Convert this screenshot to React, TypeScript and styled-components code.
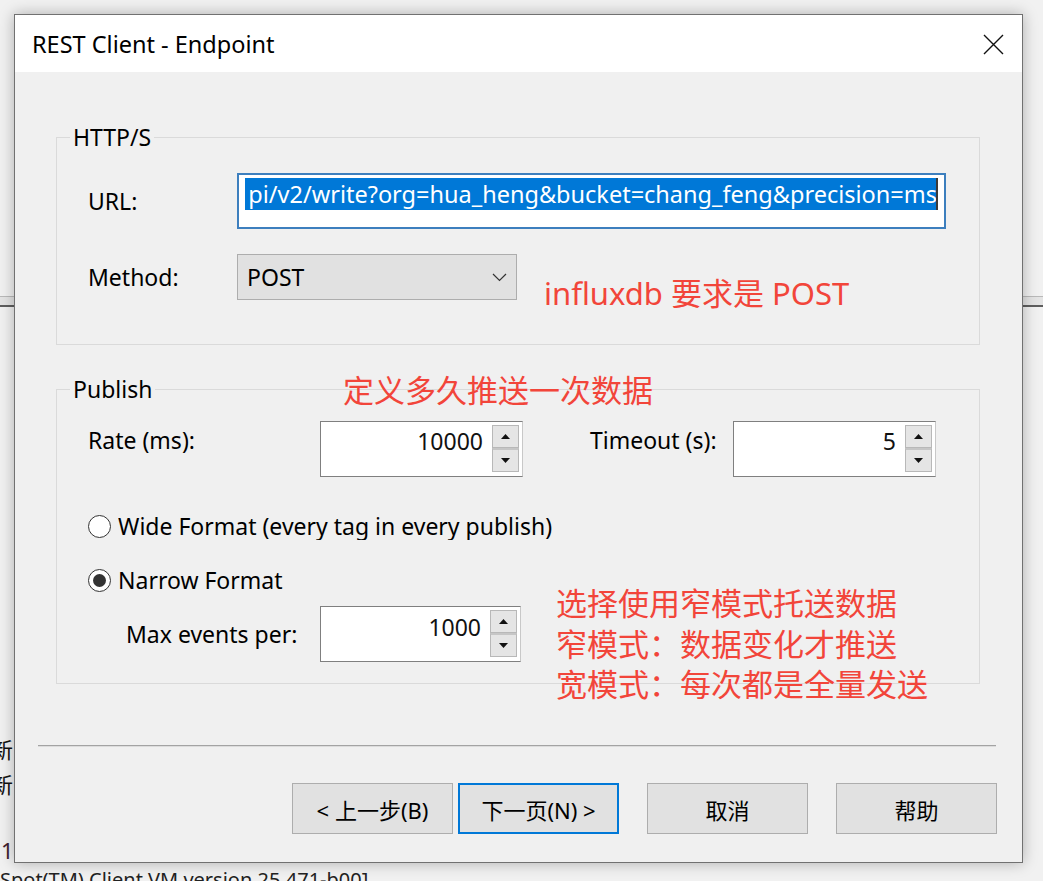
import React from 'react';
import styled, { createGlobalStyle } from 'styled-components';

const GlobalStyle = createGlobalStyle`
  html, body {
    margin: 0;
    padding: 0;
    background: #f1f1f1;
  }
  body {
    font-family: "Noto Sans", "Noto Sans CJK SC", sans-serif;
    color: #000;
  }
  * {
    box-sizing: border-box;
  }
`;

const App: React.FC = () => {
  return (
    <Desktop>
      <GlobalStyle />
      <BackdropRule />
      <BackdropGlyph $top={733}>新</BackdropGlyph>
      <BackdropGlyph $top={768}>新</BackdropGlyph>
      <BackdropDigit>1</BackdropDigit>
      <BackdropLog>Spot(TM) Client VM version 25.471-b00]</BackdropLog>

      <Window>
        <TitleBar>
          <Title>REST Client - Endpoint</Title>
          <CloseButton aria-label="close">
            <svg width="21" height="21" viewBox="0 0 21 21">
              <path d="M1 1 L20 20 M20 1 L1 20" stroke="#111" strokeWidth="1.4" fill="none" />
            </svg>
          </CloseButton>
        </TitleBar>

        <Body>
          <Content>
            <Group>
              <Legend>HTTP/S</Legend>
              <GroupBody $top={22}>
                <Row>
                  <FieldLabel $width={149}>URL:</FieldLabel>
                  <UrlInput>
                    <Selection>pi/v2/write?org=hua_heng&amp;bucket=chang_feng&amp;precision=ms</Selection>
                  </UrlInput>
                </Row>
                <Row $mt={25}>
                  <FieldLabel $width={149}>Method:</FieldLabel>
                  <Select>
                    <span>POST</span>
                    <svg width="15" height="9" viewBox="0 0 15 9">
                      <path d="M1 1 L7.5 7.5 L14 1" stroke="#333" strokeWidth="1.2" fill="none" />
                    </svg>
                  </Select>
                </Row>
              </GroupBody>
            </Group>

            <Group $mt={30} $pb={21}>
              <Legend>Publish</Legend>
              <GroupBody $top={18}>
                <Row $align="flex-start">
                  <FieldLabel $width={232} $mt={5}>Rate (ms):</FieldLabel>
                  <Spinner value="10000" />
                  <FieldLabel $width={143} $mt={5} $ml={67}>Timeout (s):</FieldLabel>
                  <Spinner value="5" />
                </Row>
                <Row $mt={35}>
                  <Radio />
                  <RadioText $clip={440}>Wide Format (every tag in every publish)</RadioText>
                </Row>
                <Row $mt={26}>
                  <Radio checked />
                  <RadioText>Narrow Format</RadioText>
                </Row>
                <Row $mt={12}>
                  <FieldLabel $width={194} $ml={38}>Max events per:</FieldLabel>
                  <Spinner value="1000" $width={201} $lift />
                </Row>
              </GroupBody>
            </Group>
          </Content>

          <Separator />

          <ButtonBar>
            <NavPair>
              <DialogButton>&lt; 上一步(B)</DialogButton>
              <DialogButton $primary>下一页(N) &gt;</DialogButton>
            </NavPair>
            <DialogButton>取消</DialogButton>
            <DialogButton>帮助</DialogButton>
          </ButtonBar>
        </Body>
      </Window>

      <Note $left={544} $top={273}>influxdb 要求是 POST</Note>
      <Note $left={343} $top={370}>定义多久推送一次数据</Note>
      <Note $left={556} $top={583}>
        选择使用窄模式托送数据
        <br />
        窄模式：数据变化才推送
        <br />
        宽模式：每次都是全量发送
      </Note>
    </Desktop>
  );
};

export default App;

interface SpinnerProps {
  value: string;
  $width?: number;
  $lift?: boolean;
}

const Spinner: React.FC<SpinnerProps> = ({ value, $width, $lift }) => (
  <SpinBox $width={$width}>
    <SpinValue $lift={$lift}>{value}</SpinValue>
    <SpinButtons>
      <SpinButton>
        <svg width="9" height="5" viewBox="0 0 9 5">
          <path d="M0 5 L4.5 0 L9 5 Z" fill="#111" />
        </svg>
      </SpinButton>
      <SpinButton>
        <svg width="9" height="5" viewBox="0 0 9 5">
          <path d="M0 0 L9 0 L4.5 5 Z" fill="#111" />
        </svg>
      </SpinButton>
    </SpinButtons>
  </SpinBox>
);

const Radio: React.FC<{ checked?: boolean }> = ({ checked }) => (
  <RadioCircle>{checked && <RadioDot />}</RadioCircle>
);

const Desktop = styled.div`
  position: relative;
  width: 1043px;
  height: 881px;
  overflow: hidden;
  background: #f1f1f1;
`;

const BackdropRule = styled.div`
  position: absolute;
  left: 0;
  right: 0;
  top: 296px;
  height: 11px;
  background: #e4e4e4;
  border-top: 1px solid #b9b9b9;
  border-bottom: 2px solid #5e5e5e;
`;

const BackdropGlyph = styled.div<{ $top: number }>`
  position: absolute;
  left: -9px;
  top: ${(p) => p.$top}px;
  font-family: "Noto Sans CJK SC", sans-serif;
  font-size: 22px;
  line-height: 30px;
  color: #111;
`;

const BackdropDigit = styled.div`
  position: absolute;
  left: 1px;
  top: 836px;
  font-size: 22px;
  line-height: 28px;
  color: #402030;
`;

const BackdropLog = styled.div`
  position: absolute;
  left: 0;
  top: 866px;
  font-family: "Noto Sans", sans-serif;
  font-size: 20px;
  line-height: 28px;
  color: #222;
  white-space: nowrap;
`;

const Window = styled.div`
  position: absolute;
  left: 14px;
  top: 14px;
  width: 1009px;
  height: 849px;
  display: flex;
  flex-direction: column;
  border: 1px solid #717171;
  background: #f0f0f0;
  box-shadow: 0 0 14px rgba(0, 0, 0, 0.28);
`;

const TitleBar = styled.div`
  height: 57px;
  flex-shrink: 0;
  display: flex;
  align-items: center;
  justify-content: space-between;
  padding: 0 18px 0 17px;
  background: #fff;
`;

const Title = styled.span`
  font-size: 23.5px;
  color: #000;
`;

const CloseButton = styled.div`
  width: 21px;
  height: 21px;
  display: flex;
  margin-top: 1px;
`;

const Body = styled.div`
  flex: 1;
  display: flex;
  flex-direction: column;
  background: #f0f0f0;
`;

const Content = styled.div`
  padding: 51px 42px 0 41px;
  display: flex;
  flex-direction: column;
`;

const Group = styled.fieldset<{ $mt?: number; $pb?: number }>`
  margin: ${(p) => p.$mt ?? 0}px 0 0 0;
  padding: 0 31px ${(p) => p.$pb ?? 44}px 31px;
  border: 1px solid #dadada;
  min-width: 0;
`;

const Legend = styled.legend`
  margin-left: -18px;
  padding: 0 3px;
  font-size: 23px;
  line-height: 28px;
`;

const GroupBody = styled.div<{ $top: number }>`
  padding-top: ${(p) => p.$top}px;
  display: flex;
  flex-direction: column;
`;

const Row = styled.div<{ $mt?: number; $align?: string }>`
  display: flex;
  align-items: ${(p) => p.$align ?? 'center'};
  margin-top: ${(p) => p.$mt ?? 0}px;
`;

const FieldLabel = styled.span<{ $width: number; $mt?: number; $ml?: number }>`
  width: ${(p) => p.$width}px;
  flex-shrink: 0;
  margin-top: ${(p) => p.$mt ?? 0}px;
  margin-left: ${(p) => p.$ml ?? 0}px;
  font-size: 23px;
  line-height: 28px;
  white-space: nowrap;
`;

const UrlInput = styled.div`
  width: 709px;
  height: 56px;
  border: 2px solid #3d7fbe;
  background: #fff;
  padding: 3px 6px 0 6px;
`;

const Selection = styled.div`
  position: relative;
  height: 32px;
  background: #0078d7;
  color: #fff;
  font-size: 23.5px;
  line-height: 32px;
  white-space: nowrap;
  overflow: hidden;
  display: flex;
  justify-content: flex-end;
  padding-right: 1px;
  &::after {
    content: '';
    position: absolute;
    right: 0;
    top: 0;
    width: 2px;
    height: 32px;
    background: #3a3a3a;
  }
`;

const Select = styled.div`
  width: 280px;
  height: 46px;
  display: flex;
  align-items: center;
  justify-content: space-between;
  padding: 0 9px 0 9px;
  background: #e1e1e1;
  border: 1px solid #adadad;
  font-size: 23px;
`;

const SpinBox = styled.div<{ $width?: number }>`
  width: ${(p) => p.$width ?? 203}px;
  height: 56px;
  flex-shrink: 0;
  display: flex;
  background: #fff;
  border: 1px solid #7f7f7f;
  border-right-color: #c8c8c8;
`;

const SpinValue = styled.div<{ $lift?: boolean }>`
  flex: 1;
  text-align: right;
  padding: ${(p) => (p.$lift ? 6 : 5)}px 9px 0 0;
  font-size: 23px;
  line-height: 28px;
  color: #111;
`;

const SpinButtons = styled.div`
  width: 27px;
  margin: 3px 3px 4px 0;
  display: flex;
  flex-direction: column;
`;

const SpinButton = styled.div`
  flex: 1;
  display: flex;
  align-items: center;
  justify-content: center;
  background: #e5e5e5;
  border: 1px solid #b8b8b8;
  & + & {
    border-top: 2px solid #c6c6c6;
  }
`;

const RadioCircle = styled.div`
  width: 23px;
  height: 23px;
  flex-shrink: 0;
  border-radius: 50%;
  border: 1px solid #333;
  background: #fff;
  display: flex;
  align-items: center;
  justify-content: center;
`;

const RadioDot = styled.div`
  width: 13px;
  height: 13px;
  border-radius: 50%;
  background: #333;
`;

const RadioText = styled.span<{ $clip?: number }>`
  margin-left: 7px;
  font-size: 23px;
  line-height: 28px;
  white-space: nowrap;
  overflow: hidden;
  ${(p) => (p.$clip ? `width: ${p.$clip}px;` : '')}
`;

const Separator = styled.div`
  margin: 61px 26px 0 23px;
  border-top: 1px solid #a3a3a3;
  border-bottom: 1px solid #dcdcdc;
`;

const ButtonBar = styled.div`
  display: flex;
  justify-content: flex-end;
  gap: 28px;
  padding: 36px 25px 0 0;
`;

const NavPair = styled.div`
  display: flex;
  gap: 5px;
`;

const DialogButton = styled.button<{ $primary?: boolean }>`
  width: 161px;
  height: 51px;
  padding: 0;
  background: #e1e1e1;
  border: ${(p) => (p.$primary ? '2px solid #0078d7' : '1px solid #adadad')};
  font-family: "Noto Sans", "Noto Sans CJK SC", sans-serif;
  font-size: 22px;
  color: #000;
`;

const Note = styled.div<{ $left: number; $top: number }>`
  position: absolute;
  left: ${(p) => p.$left}px;
  top: ${(p) => p.$top}px;
  font-family: "Noto Sans", "Noto Sans CJK SC", sans-serif;
  font-size: 31px;
  line-height: 40.5px;
  color: #f2453a;
  white-space: nowrap;
`;
